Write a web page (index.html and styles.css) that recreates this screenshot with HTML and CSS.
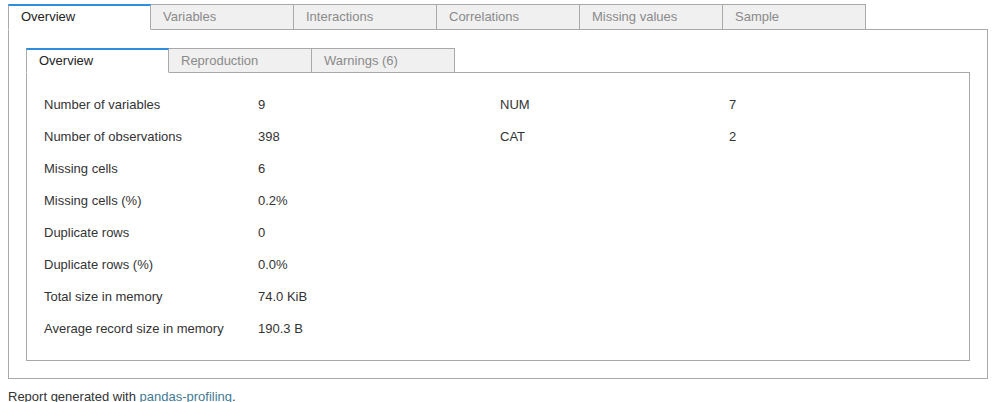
FILE: index.html
```html
<!DOCTYPE html>
<html>
<head>
<meta charset="utf-8">
<link rel="stylesheet" href="styles.css">
</head>
<body>
<div class="tabs">
  <div class="tab active">Overview</div>
  <div class="tab">Variables</div>
  <div class="tab">Interactions</div>
  <div class="tab">Correlations</div>
  <div class="tab">Missing values</div>
  <div class="tab">Sample</div>
</div>
<div class="panel outer">
  <div class="tabs">
    <div class="tab active">Overview</div>
    <div class="tab">Reproduction</div>
    <div class="tab">Warnings (6)</div>
  </div>
  <div class="panel inner">
    <div class="grid">
      <div>Number of variables</div><div>9</div><div>NUM</div><div>7</div>
      <div>Number of observations</div><div>398</div><div>CAT</div><div>2</div>
      <div>Missing cells</div><div>6</div><div></div><div></div>
      <div>Missing cells (%)</div><div>0.2%</div><div></div><div></div>
      <div>Duplicate rows</div><div>0</div><div></div><div></div>
      <div>Duplicate rows (%)</div><div>0.0%</div><div></div><div></div>
      <div>Total size in memory</div><div>74.0 KiB</div><div></div><div></div>
      <div>Average record size in memory</div><div>190.3 B</div><div></div><div></div>
    </div>
  </div>
</div>
<p class="footer">Report generated with <a href="#">pandas-profiling</a>.</p>
</body>
</html>
```

FILE: styles.css
```css
html, body {
  background: #fff;
}
body {
  margin: 4px 9px 0 8px;
  font-family: "Liberation Sans", Arial, sans-serif;
  font-size: 13px;
  color: #333;
}
.tabs {
  display: flex;
}
.tab {
  box-sizing: border-box;
  width: 143px;
  padding-left: 12px;
  background: #f0f0f0;
  border: 1px solid #a9a9a9;
  border-left: none;
  color: #8a8a8a;
  line-height: 15px;
}
.tab:first-child {
  border-left: 1px solid #a9a9a9;
}
.tab.active {
  background: #fff;
  color: #222;
  border-top: 2px solid #2f8fdc;
  border-bottom: 1px solid #fff;
}
.panel {
  border: 1px solid #a9a9a9;
}
.outer {
  margin-top: -1px;
  padding: 18px 17px 17px;
}
body > .tabs .tab {
  height: 26px;
  padding-top: 4px;
}
body > .tabs .tab.active {
  padding-top: 3px;
}
.outer > .tabs .tab {
  height: 25px;
  padding-top: 4px;
}
.outer > .tabs .tab.active {
  padding-top: 3px;
}
.inner {
  margin-top: -1px;
  padding: 15px 17px 16px;
}
.grid {
  display: grid;
  grid-template-columns: 214px 242px 229px 1fr;
  grid-auto-rows: 32px;
  align-items: center;
  line-height: 15px;
}
.footer {
  margin: 10px 0 0;
  line-height: 15px;
}
.footer a {
  color: #437a92;
  text-decoration: none;
}
```
